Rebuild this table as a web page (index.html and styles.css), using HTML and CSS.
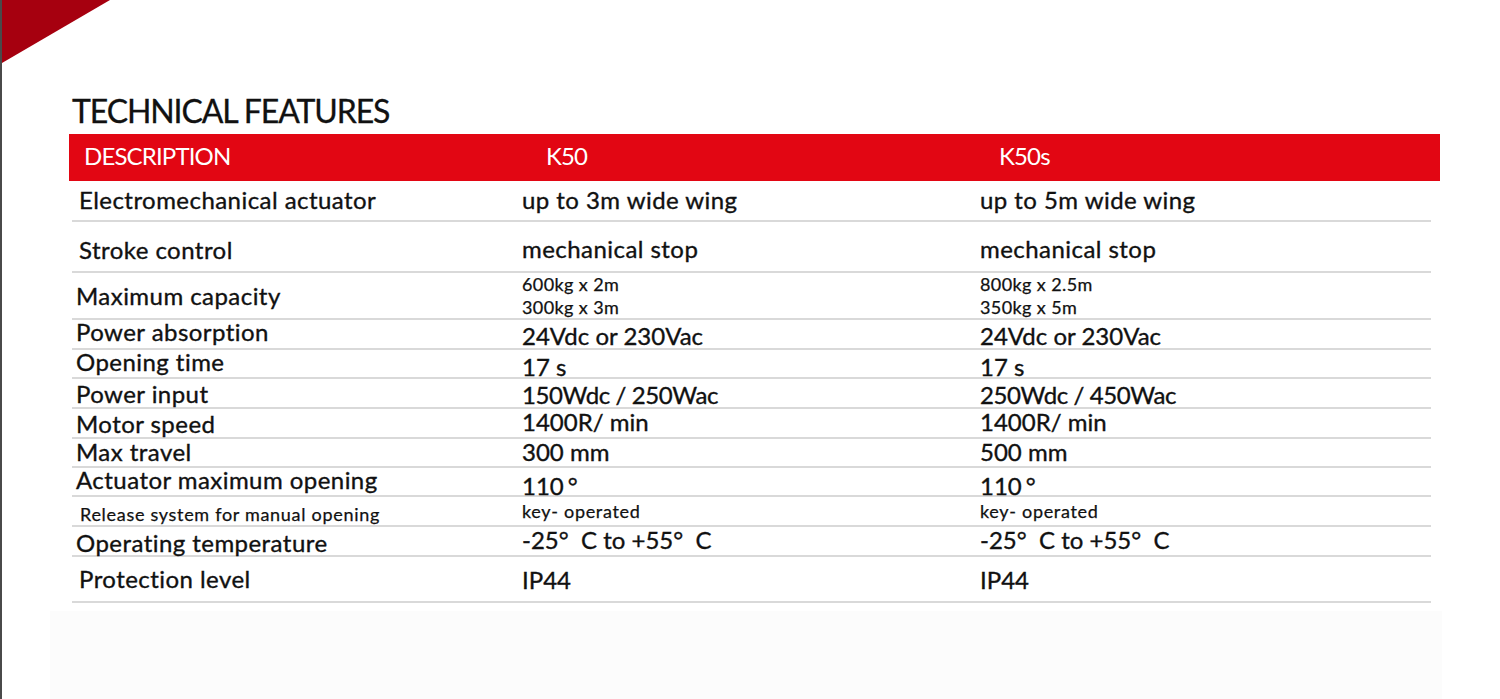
FILE: index.html
```html
<!DOCTYPE html>
<html lang="en">
<head>
<meta charset="utf-8">
<title>Technical Features</title>
<link rel="stylesheet" href="styles.css">
</head>
<body>
<div class="page">
  <div class="corner"></div>
  <h1 class="title">TECHNICAL FEATURES</h1>
  <div class="spec">
    <div class="thead">
      <div class="th th-desc">DESCRIPTION</div>
      <div class="th">K50</div>
      <div class="th">K50s</div>
    </div>
    <div class="tbody">
      <div class="row">
        <div class="c label">Electromechanical actuator</div>
        <div class="c val">up to 3m wide wing</div>
        <div class="c val">up to 5m wide wing</div>
      </div>
      <div class="row">
        <div class="c label">Stroke control</div>
        <div class="c val">mechanical stop</div>
        <div class="c val">mechanical stop</div>
      </div>
      <div class="row">
        <div class="c label">Maximum capacity</div>
        <div class="c val small">600kg x 2m<br>300kg x 3m</div>
        <div class="c val small">800kg x 2.5m<br>350kg x 5m</div>
      </div>
      <div class="row">
        <div class="c label">Power absorption</div>
        <div class="c val num">24Vdc or 230Vac</div>
        <div class="c val num">24Vdc or 230Vac</div>
      </div>
      <div class="row">
        <div class="c label">Opening time</div>
        <div class="c val num">17 s</div>
        <div class="c val num">17 s</div>
      </div>
      <div class="row">
        <div class="c label">Power input</div>
        <div class="c val num tight">150Wdc / 250Wac</div>
        <div class="c val num tight">250Wdc / 450Wac</div>
      </div>
      <div class="row">
        <div class="c label">Motor speed</div>
        <div class="c val num">1400R/ min</div>
        <div class="c val num">1400R/ min</div>
      </div>
      <div class="row">
        <div class="c label">Max travel</div>
        <div class="c val num">300 mm</div>
        <div class="c val num">500 mm</div>
      </div>
      <div class="row">
        <div class="c label">Actuator maximum opening</div>
        <div class="c val num">110<span class="deg">°</span></div>
        <div class="c val num">110<span class="deg">°</span></div>
      </div>
      <div class="row">
        <div class="c label minor">Release system for manual opening</div>
        <div class="c val minor">key- operated</div>
        <div class="c val minor">key- operated</div>
      </div>
      <div class="row">
        <div class="c label">Operating temperature</div>
        <div class="c val num">-25°&nbsp; C to +55°&nbsp; C</div>
        <div class="c val num">-25°&nbsp; C to +55°&nbsp; C</div>
      </div>
      <div class="row">
        <div class="c label">Protection level</div>
        <div class="c val num">IP44</div>
        <div class="c val num">IP44</div>
      </div>
    </div>
  </div>
  <div class="sheet"></div>
</div>
</body>
</html>
```

FILE: styles.css
```css
* { box-sizing: border-box; }

html, body {
  margin: 0;
  padding: 0;
  background: #ffffff;
}

body {
  font-family: "Lato", "Open Sans", sans-serif;
  color: #111111;
}

.page {
  position: relative;
  width: 1500px;
  height: 699px;
  overflow: hidden;
  border-left: 2px solid #4a4a4a;
}

.corner {
  position: absolute;
  left: 0;
  top: 0;
  width: 108px;
  height: 63px;
  background: #a6000f;
  clip-path: polygon(0 0, 100% 0, 0 100%);
}

.title {
  margin: 0;
  padding: 95px 0 0 70px;
  font-size: 32px;
  line-height: 32px;
  font-weight: 400;
  letter-spacing: -1.1px;
  color: #111111;
  -webkit-text-stroke: 0.3px #111111;
}

.spec {
  margin: 7px 0 0 67px;
  width: 1371px;
}

.thead {
  display: grid;
  grid-template-columns: 477px 453px 1fr;
  align-items: center;
  height: 47px;
  background: #e20613;
  color: #ffffff;
}

.th {
  font-size: 24px;
  line-height: 1;
  padding-bottom: 3px;
  letter-spacing: -0.85px;
}

.th-desc {
  padding-left: 15px;
}

.tbody {
  margin-left: 3px;
  width: 1359px;
}

.row {
  display: grid;
  grid-template-columns: 450px 458px 1fr;
  align-items: end;
  border-bottom: 2px solid #d9d9d9;
  --pb1: 4px;
  --pb2: 4px;
}

.c {
  font-size: 24px;
  line-height: 1;
  white-space: nowrap;
  letter-spacing: 0.45px;
  -webkit-text-stroke: 0.35px #111111;
}

.label {
  padding-left: 4px;
  padding-bottom: var(--pb1);
}

.val {
  padding-bottom: var(--pb2);
}

.num {
  letter-spacing: 0;
}

.tight {
  letter-spacing: -0.4px;
}

.deg {
  margin-left: 4px;
}

.small {
  font-size: 18px;
  line-height: 23px;
  letter-spacing: 0.4px;
  -webkit-text-stroke: 0.25px #111111;
}

.minor {
  font-size: 18px;
  letter-spacing: 0.7px;
  -webkit-text-stroke: 0.25px #111111;
}

.row:nth-child(1)  { height: 41px; --pb1: 8px;  --pb2: 8px; }
.row:nth-child(2)  { height: 51px; --pb1: 9px;  --pb2: 10px; }
.row:nth-child(3)  { height: 47px; --pb1: 11px; --pb2: 0px; }
.row:nth-child(4)  { height: 30px; --pb1: 6px;  --pb2: 2px; }
.row:nth-child(5)  { height: 29px; --pb1: 7px;  --pb2: 2px; }
.row:nth-child(6)  { height: 30px; --pb1: 1px;  --pb2: 0px; }
.row:nth-child(7)  { height: 30px; --pb1: 1px;  --pb2: 3px; }
.row:nth-child(8)  { height: 29px; --pb1: 2px;  --pb2: 2px; }
.row:nth-child(9)  { height: 29px; --pb1: 6px;  --pb2: 0px; }
.row:nth-child(10) { height: 30px; --pb1: 2px;  --pb2: 5px; }
.row:nth-child(11) { height: 30px; --pb1: 0px;  --pb2: 3px; }
.row:nth-child(12) { height: 46px; --pb1: 10px; --pb2: 9px; }

.row:nth-child(1) .label,
.row:nth-child(2) .label,
.row:nth-child(12) .label { padding-left: 7px; }
.row:nth-child(10) .label { padding-left: 8px; }

.sheet {
  margin: 8px 0 0 48px;
  width: 1392px;
  height: 100px;
  background: #fcfcfc;
}
```
